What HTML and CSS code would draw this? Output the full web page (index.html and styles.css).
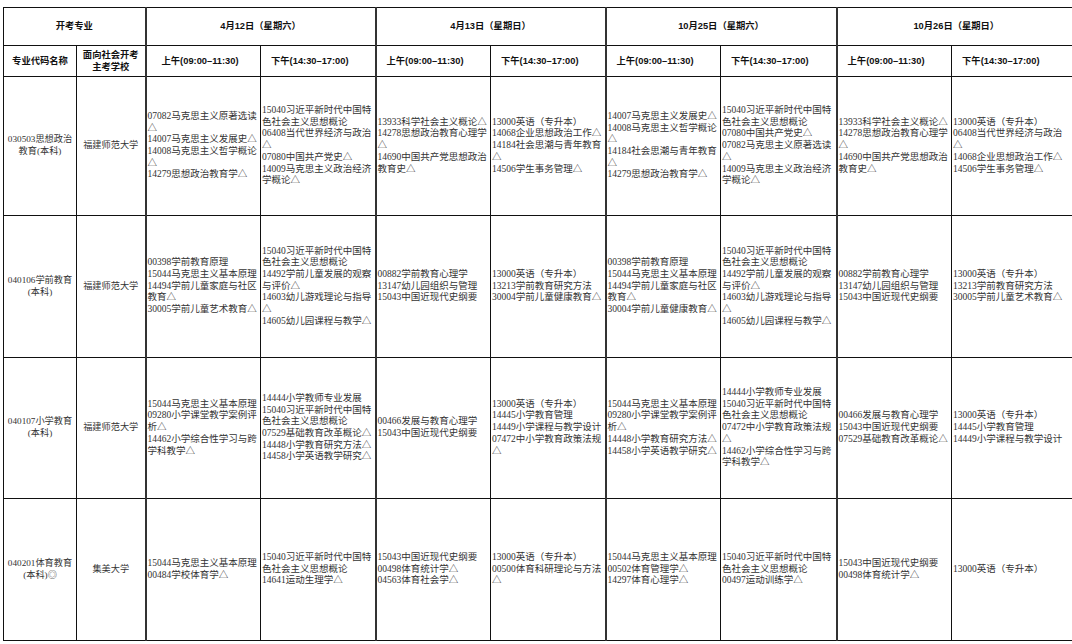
FILE: index.html
```html
<!DOCTYPE html>
<html lang="zh-CN">
<head>
<meta charset="utf-8">
<title>考试安排</title>
<link rel="stylesheet" href="styles.css">
</head>
<body>
<table class="plan">
  <colgroup>
    <col class="c-code"><col class="c-school">
    <col class="c-slot"><col class="c-slot"><col class="c-slot"><col class="c-slot">
    <col class="c-slot"><col class="c-slot8"><col class="c-slot"><col class="c-last">
  </colgroup>
  <thead>
    <tr class="h1">
      <th colspan="2">开考专业</th>
      <th colspan="2" class="day">4月12日（星期六）</th>
      <th colspan="2" class="day">4月13日（星期日）</th>
      <th colspan="2" class="day">10月25日（星期六）</th>
      <th colspan="2" class="day">10月26日（星期日）</th>
    </tr>
    <tr class="h2">
      <th>专业代码名称</th>
      <th>面向社会开考<br>主考学校</th>
      <th class="day slot first">上午(09:00–11:30)</th>
      <th class="slot">下午(14:30–17:00)</th>
      <th class="day slot">上午(09:00–11:30)</th>
      <th class="slot">下午(14:30–17:00)</th>
      <th class="day slot">上午(09:00–11:30)</th>
      <th class="slot">下午(14:30–17:00)</th>
      <th class="day slot">上午(09:00–11:30)</th>
      <th class="slot">下午(14:30–17:00)</th>
    </tr>
  </thead>
  <tbody>
    <tr class="r1">
      <td class="major">030503思想政治教育(本科)</td>
      <td class="school">福建师范大学</td>
      <td class="day"><div>07082马克思主义原著选读△</div><div>14007马克思主义发展史△</div><div>14008马克思主义哲学概论△</div><div>14279思想政治教育学△</div></td>
      <td><div>15040习近平新时代中国特色社会主义思想概论</div><div>06408当代世界经济与政治△</div><div>07080中国共产党史△</div><div>14009马克思主义政治经济学概论△</div></td>
      <td class="day"><div>13933科学社会主义概论△</div><div>14278思想政治教育心理学△</div><div>14690中国共产党思想政治教育史△</div></td>
      <td><div>13000英语（专升本）</div><div>14068企业思想政治工作△</div><div>14184社会思潮与青年教育△</div><div>14506学生事务管理△</div></td>
      <td class="day"><div>14007马克思主义发展史△</div><div>14008马克思主义哲学概论△</div><div>14184社会思潮与青年教育△</div><div>14279思想政治教育学△</div></td>
      <td><div>15040习近平新时代中国特色社会主义思想概论</div><div>07080中国共产党史△</div><div>07082马克思主义原著选读△</div><div>14009马克思主义政治经济学概论△</div></td>
      <td class="day"><div>13933科学社会主义概论△</div><div>14278思想政治教育心理学△</div><div>14690中国共产党思想政治教育史△</div></td>
      <td class="end"><div>13000英语（专升本）</div><div>06408当代世界经济与政治△</div><div>14068企业思想政治工作△</div><div>14506学生事务管理△</div></td>
    </tr>
    <tr class="r2">
      <td class="major">040106学前教育(本科)</td>
      <td class="school">福建师范大学</td>
      <td class="day"><div>00398学前教育原理</div><div>15044马克思主义基本原理</div><div>14494学前儿童家庭与社区教育△</div><div>30005学前儿童艺术教育△</div></td>
      <td><div>15040习近平新时代中国特色社会主义思想概论</div><div>14492学前儿童发展的观察与评价△</div><div>14603幼儿游戏理论与指导△</div><div>14605幼儿园课程与教学△</div></td>
      <td class="day"><div>00882学前教育心理学</div><div>13147幼儿园组织与管理</div><div>15043中国近现代史纲要</div></td>
      <td><div>13000英语（专升本）</div><div>13213学前教育研究方法</div><div>30004学前儿童健康教育△</div></td>
      <td class="day"><div>00398学前教育原理</div><div>15044马克思主义基本原理</div><div>14494学前儿童家庭与社区教育△</div><div>30004学前儿童健康教育△</div></td>
      <td><div>15040习近平新时代中国特色社会主义思想概论</div><div>14492学前儿童发展的观察与评价△</div><div>14603幼儿游戏理论与指导△</div><div>14605幼儿园课程与教学△</div></td>
      <td class="day"><div>00882学前教育心理学</div><div>13147幼儿园组织与管理</div><div>15043中国近现代史纲要</div></td>
      <td class="end"><div>13000英语（专升本）</div><div>13213学前教育研究方法</div><div>30005学前儿童艺术教育△</div></td>
    </tr>
    <tr class="r3">
      <td class="major">040107小学教育(本科)</td>
      <td class="school">福建师范大学</td>
      <td class="day"><div>15044马克思主义基本原理</div><div>09280小学课堂教学案例评析△</div><div>14462小学综合性学习与跨学科教学△</div></td>
      <td><div>14444小学教师专业发展</div><div>15040习近平新时代中国特色社会主义思想概论</div><div>07529基础教育改革概论△</div><div>14448小学教育研究方法△</div><div>14458小学英语教学研究△</div></td>
      <td class="day"><div>00466发展与教育心理学</div><div>15043中国近现代史纲要</div></td>
      <td><div>13000英语（专升本）</div><div>14445小学教育管理</div><div>14449小学课程与教学设计</div><div>07472中小学教育政策法规△</div></td>
      <td class="day"><div>15044马克思主义基本原理</div><div>09280小学课堂教学案例评析△</div><div>14448小学教育研究方法△</div><div>14458小学英语教学研究△</div></td>
      <td><div>14444小学教师专业发展</div><div>15040习近平新时代中国特色社会主义思想概论</div><div>07472中小学教育政策法规△</div><div>14462小学综合性学习与跨学科教学△</div></td>
      <td class="day"><div>00466发展与教育心理学</div><div>15043中国近现代史纲要</div><div>07529基础教育改革概论△</div></td>
      <td class="end"><div>13000英语（专升本）</div><div>14445小学教育管理</div><div>14449小学课程与教学设计</div></td>
    </tr>
    <tr class="r4">
      <td class="major">040201体育教育(本科)◎</td>
      <td class="school">集美大学</td>
      <td class="day"><div>15044马克思主义基本原理</div><div>00484学校体育学△</div></td>
      <td><div>15040习近平新时代中国特色社会主义思想概论</div><div>14641运动生理学△</div></td>
      <td class="day"><div>15043中国近现代史纲要</div><div>00498体育统计学△</div><div>04563体育社会学△</div></td>
      <td><div>13000英语（专升本）</div><div>00500体育科研理论与方法△</div></td>
      <td class="day"><div>15044马克思主义基本原理</div><div>00502体育管理学△</div><div>14297体育心理学△</div></td>
      <td><div>15040习近平新时代中国特色社会主义思想概论</div><div>00497运动训练学△</div></td>
      <td class="day"><div>15043中国近现代史纲要</div><div>00498体育统计学△</div></td>
      <td class="end"><div>13000英语（专升本）</div></td>
    </tr>
  </tbody>
</table>
</body>
</html>
```

FILE: styles.css
```css
html, body {
  margin: 0;
  padding: 0;
  background: #fff;
  overflow: hidden;
}

.plan {
  margin: 7px 0 0 3px;
  border-collapse: collapse;
  table-layout: fixed;
  width: 1072px;
  font-family: "Liberation Serif", "Noto Sans CJK SC", serif;
  font-size: 9.5px;
  line-height: 11.7px;
  color: #333;
}

.c-code { width: 73px; }
.c-school { width: 69px; }
.c-slot { width: 115px; }
.c-slot8 { width: 116px; }
.c-last { width: 124px; }

.plan th,
.plan td {
  border: 1px solid #111;
  padding: 0 1px;
  vertical-align: middle;
}

.plan th.day,
.plan td.day {
  border-left: 2px solid #333;
}

.plan th {
  font-family: "Liberation Sans", "Noto Sans CJK SC", sans-serif;
  font-weight: bold;
  font-size: 9.3px;
  line-height: 12.5px;
  color: #111;
  text-align: center;
}

.h1 { height: 38px; }
.h2 { height: 31px; }

.plan th.slot {
  text-align: left;
  padding-left: 10px;
}

.plan th.slot.first {
  padding-left: 15px;
}

.r1 { height: 139px; }
.r2 { height: 142px; }
.r3 { height: 141px; }
.r4 { height: 142px; }

.plan td {
  text-align: left;
}

.plan td.end {
  padding-right: 6px;
}

.plan td.major {
  text-align: center;
  font-size: 9.2px;
  padding: 0 3px;
}

.plan td.school {
  text-align: center;
  font-size: 9.2px;
}
```
